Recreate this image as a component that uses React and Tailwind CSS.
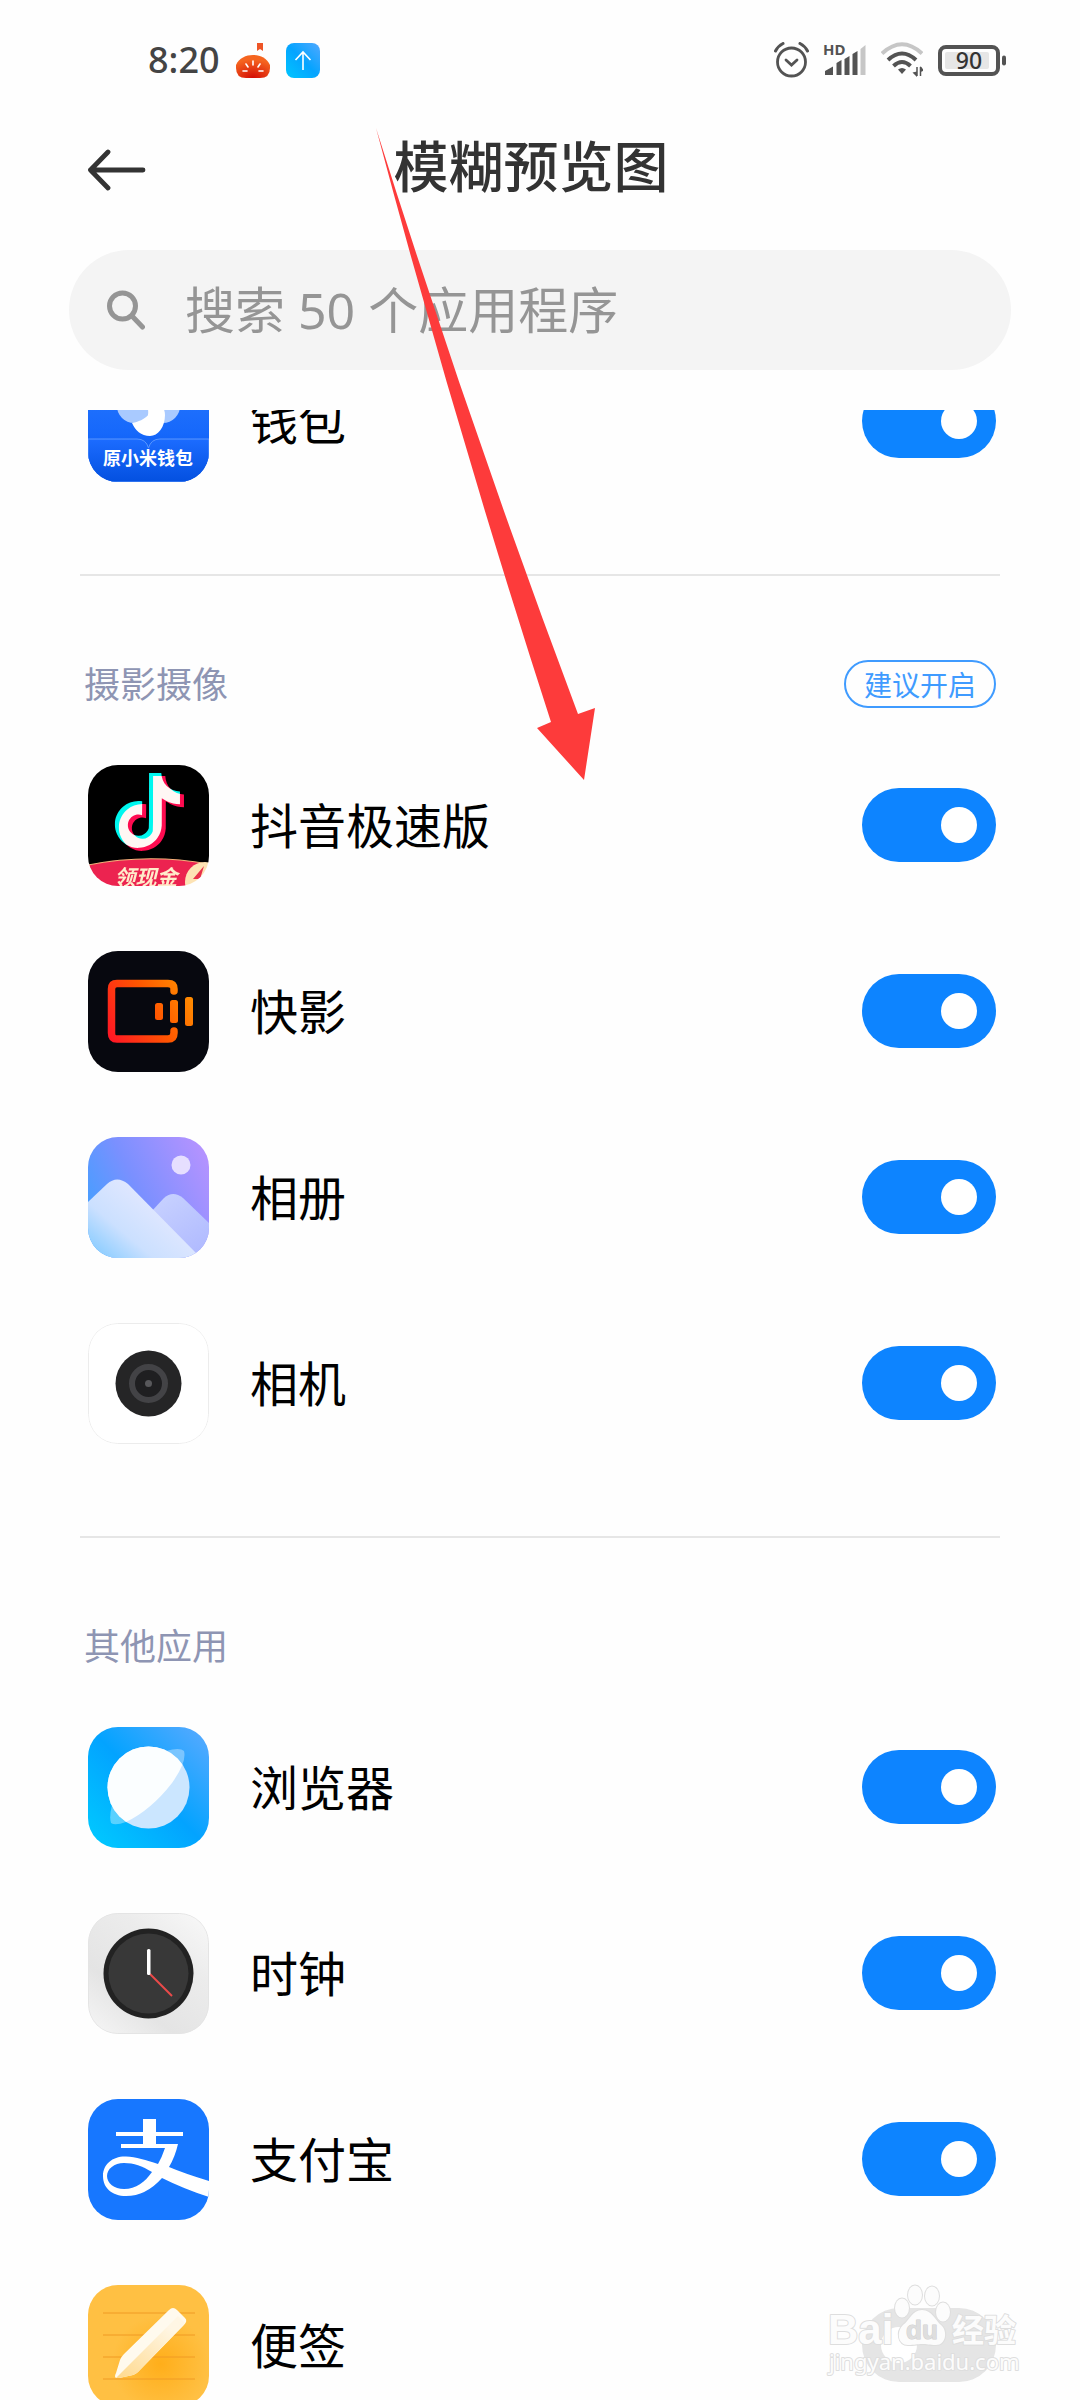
import React, { useState } from 'react';

const WalletIcon = () => (
  <svg viewBox="0 0 121 121" className="size-full">
    <defs>
      <linearGradient id="walletBg" x1="0" y1="0" x2="0" y2="1">
        <stop offset="0" stopColor="#2b7bff" />
        <stop offset="0.6" stopColor="#1668fb" />
        <stop offset="1" stopColor="#0350e0" />
      </linearGradient>
      <linearGradient id="walletFlap" x1="0" y1="0" x2="0" y2="1">
        <stop offset="0" stopColor="#1c6cff" />
        <stop offset="1" stopColor="#0350e0" />
      </linearGradient>
    </defs>
    <rect width="121" height="121" fill="url(#walletBg)" />
    <circle cx="46" cy="45" r="17" fill="#a9caff" />
    <circle cx="75" cy="45" r="17" fill="#a9caff" />
    <path d="M44 62C50 61 57 58 60 54C61 48 58 42 60 40C68 38 77 44 77 54C77 66 70 75 62 75C53 75 47 69 44 62Z" fill="#fff" />
    <path d="M0 78H49Q58 78 60.500 87Q63 78 72 78H121V121H0Z" fill="url(#walletFlap)" stroke="#5a97ff" strokeWidth="1" />
    <text x="60" y="104" textAnchor="middle" fill="#fff" className="font-['Noto_Sans_CJK_SC',sans-serif] text-[18px] font-bold">原小米钱包</text>
  </svg>
);

const notePath =
  'M12.525.02c1.31-.02 2.61-.01 3.91-.02.08 1.53.63 3.09 1.75 4.17 1.12 1.11 2.7 1.62 4.24 1.79v4.03c-1.44-.05-2.89-.35-4.2-.97-.57-.26-1.1-.59-1.62-.93-.01 2.92.01 5.84-.02 8.75-.08 1.4-.54 2.79-1.35 3.94-1.31 1.92-3.58 3.17-5.91 3.21-1.43.08-2.86-.31-4.08-1.03-2.02-1.19-3.44-3.37-3.65-5.71-.02-.5-.03-1-.01-1.49.18-1.9 1.12-3.72 2.58-4.96 1.66-1.44 3.98-2.13 6.15-1.72.02 1.48-.04 2.96-.04 4.44-.99-.32-2.15-.23-3.02.37-.63.41-1.11 1.04-1.36 1.75-.21.51-.15 1.07-.14 1.61.24 1.64 1.82 3.02 3.5 2.87 1.12-.01 2.19-.66 2.77-1.61.19-.33.4-.67.41-1.06.1-1.79.06-3.57.07-5.36.01-4.03-.01-8.05.02-12.07z';

const DouyinIcon = () => (
  <svg viewBox="0 0 121 121" className="size-full isolate">
    <rect width="121" height="121" fill="#000" />
    <path d={notePath} transform="translate(22 8) scale(3.12)" fill="#00f7ef" />
    <path d={notePath} transform="translate(26 11) scale(3.12)" fill="#ff0b50" className="mix-blend-screen" />
    <path d="M0 100Q60 88 121 99V121H0Z" fill="#ec2350" />
    <path d="M0 100Q60 88 121 99" fill="none" stroke="#f3b27a" strokeWidth="1.2" />
    <text x="58" y="120" textAnchor="middle" fill="#ffeccb" className="font-['Noto_Sans_CJK_SC',sans-serif] text-[21px] font-bold italic">领现金</text>
    <circle cx="117" cy="117" r="20" fill="#fde3b4" />
    <path d="M116 101L105 114H111L108 121L119 111H113Z" fill="#e8304a" />
  </svg>
);

const KuaiyingIcon = () => (
  <svg viewBox="0 0 121 121" className="size-full">
    <defs>
      <linearGradient id="kuaiying" gradientUnits="userSpaceOnUse" x1="24" y1="90" x2="104" y2="46">
        <stop offset="0" stopColor="#ff1724" />
        <stop offset="0.55" stopColor="#ff5500" />
        <stop offset="1" stopColor="#ff8c00" />
      </linearGradient>
    </defs>
    <rect width="121" height="121" fill="#07080f" />
    <path d="M86 40V38Q86 32.500 80 32.500H29Q23.500 32.500 23.500 38V82Q23.500 88 29 88H80Q86 88 86 82V80" fill="none" stroke="url(#kuaiying)" strokeWidth="7.500" strokeLinecap="round" />
    <g fill="url(#kuaiying)">
      <rect x="67" y="52" width="8" height="17" rx="2.500" />
      <rect x="82" y="49" width="8" height="23" rx="2.500" />
      <rect x="97" y="46" width="8" height="29" rx="2.500" />
    </g>
  </svg>
);

const GalleryIcon = () => (
  <svg viewBox="0 0 121 121" className="size-full">
    <defs>
      <linearGradient id="sky" x1="0" y1="0.6" x2="1" y2="0.1">
        <stop offset="0" stopColor="#469eff" />
        <stop offset="0.4" stopColor="#7a90ff" />
        <stop offset="1" stopColor="#b893ff" />
      </linearGradient>
      <linearGradient id="hillFront" x1="0" y1="1" x2="0.7" y2="0.4">
        <stop offset="0" stopColor="#7ac8ff" />
        <stop offset="0.5" stopColor="#cbe0ff" />
        <stop offset="1" stopColor="#e0e7ff" />
      </linearGradient>
      <linearGradient id="hillBack" x1="0" y1="0" x2="1" y2="1">
        <stop offset="0.3" stopColor="#c6d0ff" />
        <stop offset="1" stopColor="#adb7ff" />
      </linearGradient>
    </defs>
    <rect width="121" height="121" fill="url(#sky)" />
    <circle cx="93" cy="28" r="9.500" fill="#e6dfff" />
    <path d="M20 121L76 61Q85 53 95 61L121 86V121Z" fill="url(#hillBack)" />
    <path d="M0 65L19 47Q29 38 40 47L108 116V121H0Z" fill="url(#hillFront)" />
  </svg>
);

const CameraIcon = () => (
  <svg viewBox="0 0 121 121" className="size-full">
    <rect width="121" height="121" fill="#fff" />
    <rect x="0.500" y="0.500" width="120" height="120" rx="29" fill="none" stroke="#ececec" />
    <circle cx="60.500" cy="60.500" r="33" fill="#252526" />
    <circle cx="60.500" cy="60.500" r="16.500" fill="#1f1f21" stroke="#434346" strokeWidth="6" />
    <circle cx="60.500" cy="60.500" r="3.500" fill="#58585b" />
  </svg>
);

const BrowserIcon = () => (
  <svg viewBox="0 0 121 121" className="size-full">
    <defs>
      <linearGradient id="browserBg" x1="0" y1="1" x2="1" y2="0">
        <stop offset="0" stopColor="#00ccff" />
        <stop offset="0.5" stopColor="#03a3ff" />
        <stop offset="1" stopColor="#5caaff" />
      </linearGradient>
      <clipPath id="planet">
        <circle cx="60.500" cy="60.500" r="41" />
      </clipPath>
    </defs>
    <rect width="121" height="121" fill="url(#browserBg)" />
    <path d="M78 24Q92 20 96 24Q99 35 84 56Q63 83 38 95Q27 99 23 96Q21 90 24 78Z" fill="#fff" opacity="0.35" />
    <circle cx="60.500" cy="60.500" r="41" fill="#cbe6ff" />
    <path d="M97 24Q98 36 84 56Q63 83 38 95L0 121V0H97Z" fill="#fbfeff" clipPath="url(#planet)" />
  </svg>
);

const ClockIcon = () => (
  <svg viewBox="0 0 121 121" className="size-full">
    <defs>
      <linearGradient id="clockBg" x1="0.1" y1="1" x2="0.9" y2="0">
        <stop offset="0" stopColor="#f4f4f4" />
        <stop offset="0.3" stopColor="#e4e4e4" />
        <stop offset="0.7" stopColor="#ececec" />
        <stop offset="1" stopColor="#f7f7f7" />
      </linearGradient>
    </defs>
    <rect width="121" height="121" fill="url(#clockBg)" />
    <rect x="0.500" y="0.500" width="120" height="120" rx="29" fill="none" stroke="#e4e4e4" />
    <circle cx="60.500" cy="60.500" r="45" fill="#222" />
    <circle cx="60.500" cy="60.500" r="40" fill="#383838" />
    <path d="M62 61L84 83" stroke="#ea4a4a" strokeWidth="2" />
    <rect x="59" y="36" width="3.500" height="26" rx="1.500" fill="#fff" />
  </svg>
);

const AlipayIcon = () => (
  <svg viewBox="0 0 121 121" className="size-full">
    <rect width="121" height="121" fill="#1777ff" />
    <g fill="#fff">
      <path d="M55 20H68V33H95V37H68V45H90Q87 58 81 68Q95 74 121 82V98Q96 90 74 79Q58 97 38 97C24 97 15 89 15 77C15 65 25 57 38 57.500C48 58 58 61 70 65Q74 58 77 49H33V45H55V37H28V33H55Z" />
    </g>
    <path d="M64 73C54 67 46 64 36 64C26 64 19 70 19 77C19 84 26 90 36 90C48 90 57 83 64 73Z" fill="#1777ff" />
  </svg>
);

const NotesIcon = () => (
  <svg viewBox="0 0 121 121" className="size-full">
    <defs>
      <radialGradient id="notesBg" cx="0.6" cy="0.65" r="0.4">
        <stop offset="0" stopColor="#ffae1a" />
        <stop offset="1" stopColor="#ffc043" />
      </radialGradient>
      <linearGradient id="pencil" x1="0" y1="1" x2="1" y2="0">
        <stop offset="0" stopColor="#ffd98c" />
        <stop offset="0.8" stopColor="#fff6e4" />
      </linearGradient>
    </defs>
    <rect width="121" height="121" fill="url(#notesBg)" />
    <path d="M15 28H107M15 50H107M15 72H107M15 94H107" stroke="#f09a25" strokeWidth="1" />
    <path d="M28 93Q26 92 28 88L32 75Q33 72 36 69L81 25Q85 21 89 25L97 33Q100 36 96 40L50 87Q48 89 45 90L31 93Z" fill="#fffaee" />
    <path d="M28 93L90 31L97 38L50 87Q48 89 45 90L31 93Z" fill="url(#pencil)" />
  </svg>
);

const SearchIcon = () => (
  <svg viewBox="0 0 38 40" className="h-10 w-[38px] shrink-0" fill="none" stroke="#959595" strokeWidth="5">
    <circle cx="15.500" cy="16" r="13" />
    <path d="M25 26L35.500 37" strokeLinecap="round" />
  </svg>
);

const TomatoIcon = () => (
  <svg viewBox="0 0 34 35" className="h-[35px] w-[34px]">
    <defs>
      <radialGradient id="tomato" cx="0.5" cy="1" r="0.8">
        <stop offset="0" stopColor="#d30c05" />
        <stop offset="1" stopColor="#f5641f" />
      </radialGradient>
    </defs>
    <path d="M21 0H27V8L24 6L21 8Z" fill="#ee5526" />
    <path d="M0 22C3 15 10 12 17 12S31 15 34 22V25Q34 35 24 35H10Q0 35 0 25Z" fill="url(#tomato)" />
    <path d="M17 18V22M10 21L12 24M24 21L22 24M7 28H11M27 28H23" stroke="#fff" strokeWidth="1.600" strokeLinecap="round" />
  </svg>
);

const UploadIcon = () => (
  <svg viewBox="0 0 34 35" className="h-[35px] w-[34px]">
    <defs>
      <linearGradient id="uploadBg" x1="0" y1="1" x2="1" y2="0">
        <stop offset="0" stopColor="#00c6ff" />
        <stop offset="0.5" stopColor="#05a4ff" />
        <stop offset="1" stopColor="#52a8ff" />
      </linearGradient>
    </defs>
    <rect width="34" height="35" rx="8" fill="url(#uploadBg)" />
    <path d="M17 27V9M9.500 17L17 9L24.500 17" fill="none" stroke="#fff" strokeWidth="1.600" />
  </svg>
);

const AlarmIcon = () => (
  <svg viewBox="0 0 35 36" className="h-9 w-[35px]" fill="none" stroke="#535353" strokeLinecap="round">
    <circle cx="17.500" cy="20" r="14" strokeWidth="2.800" />
    <path d="M12 18L17.500 23L23 18" strokeWidth="2.800" />
    <path d="M1.500 9Q4 4 9 1.500M33.500 9Q31 4 26 1.500" strokeWidth="3" />
  </svg>
);

const SignalIcon = () => (
  <svg viewBox="0 0 42 34" className="h-[34px] w-[42px] overflow-visible" fill="#535353">
    <text x="-1" y="12" className="font-['Noto_Sans',sans-serif] text-[15px] font-bold">HD</text>
    <path d="M1 32V28L9 23.500V32ZM12.500 32V20L17.500 17V32ZM20.500 32V16L25.500 13V32ZM28.500 32V11L33.500 8V32Z" />
    <path d="M36.500 32V6L41.500 2V32Z" fill="#c6c6c6" />
  </svg>
);

const WifiIcon = () => (
  <svg viewBox="0 0 42 36" className="h-9 w-[42px]" fill="none" stroke="#535353" strokeWidth="4">
    <path d="M1 11.500Q21 -7 41 11.500" stroke="#c6c6c6" />
    <path d="M7 18Q21 5 35 18" />
    <path d="M12.500 24Q21 16 29.500 24" />
    <path d="M17 27.500Q21 24.500 25 27.500L21 32Z" fill="#535353" stroke="none" />
    <path d="M36 25V34M39.500 25V34" strokeWidth="1.500" />
    <path d="M36 35V29.500L31.500 30.500ZM39.500 24V30L43 28.500Z" fill="#535353" stroke="none" />
  </svg>
);

const BatteryIcon = () => (
  <svg viewBox="0 0 68 31" className="h-[31px] w-[68px]">
    <rect x="2" y="2" width="58" height="27" rx="6" fill="none" stroke="#535353" strokeWidth="4" />
    <rect x="7" y="7" width="44" height="17" rx="2" fill="#e6e6e6" />
    <rect x="64" y="10.500" width="4" height="10" rx="2" fill="#535353" />
    <text x="31" y="24" textAnchor="middle" fill="#333" className="font-['Noto_Sans',sans-serif] text-[23px] font-medium">90</text>
  </svg>
);

const sections = [
  {
    apps: [{ id: 'wallet', name: '钱包', icon: WalletIcon, on: true }],
  },
  {
    title: '摄影摄像',
    badge: '建议开启',
    apps: [
      { id: 'douyin', name: '抖音极速版', icon: DouyinIcon, on: true },
      { id: 'kuaiying', name: '快影', icon: KuaiyingIcon, on: true },
      { id: 'gallery', name: '相册', icon: GalleryIcon, on: true },
      { id: 'camera', name: '相机', icon: CameraIcon, on: true },
    ],
  },
  {
    title: '其他应用',
    apps: [
      { id: 'browser', name: '浏览器', icon: BrowserIcon, on: true },
      { id: 'clock', name: '时钟', icon: ClockIcon, on: true },
      { id: 'alipay', name: '支付宝', icon: AlipayIcon, on: true },
      { id: 'notes', name: '便签', icon: NotesIcon, on: false },
    ],
  },
];

const AppRow = ({ app }) => {
  const [checked, setChecked] = useState(app.on);
  const Icon = app.icon;

  return (
    <li className="flex h-[186px] items-center gap-[41px] pr-[84px] pl-[88px]">
      <div className="size-[121px] shrink-0 overflow-hidden rounded-[30px]">
        <Icon />
      </div>
      <label htmlFor={app.id} className="flex-1 pb-1 text-[48px] leading-[60px] text-black">{app.name}</label>
      <input
        id={app.id}
        type="checkbox"
        checked={checked}
        onChange={(e) => setChecked(e.target.checked)}
        className="flex h-[74px] w-[134px] shrink-0 appearance-none items-center rounded-full bg-[#e5e5e5] px-[19px] before:size-9 before:rounded-full before:bg-white checked:justify-end checked:bg-[#0d84ff]"
      />
    </li>
  );
};

const Section = ({ section }) => (
  <section className="pb-[60px]">
    {section.title && (
      <>
        <hr className="mx-20 border-t-2 border-[#e6e6e6]" />
        <div className="mt-[60px] flex h-24 items-center justify-between pr-[84px] pl-[84px]">
          <h2 className="pb-1 text-[36px] leading-[48px] text-[#8e95b3]">{section.title}</h2>
          {section.badge && (
            <span className="flex h-12 items-center rounded-full border-2 border-[#3f9bff] px-[18px] text-[28px] leading-[40px] text-[#3f9bff]">
              {section.badge}
            </span>
          )}
        </div>
      </>
    )}
    <ul>
      {section.apps.map((app) => (
        <AppRow key={app.id} app={app} />
      ))}
    </ul>
  </section>
);

const Watermark = () => (
  <svg viewBox="0 0 200 104" className="pointer-events-none absolute right-[56px] bottom-[14px] h-[104px] w-[200px]">
    <g fill="#fcfcfc" stroke="#dedede" strokeWidth="2" paintOrder="stroke" strokeLinejoin="round">
      <ellipse cx="78" cy="26" rx="7" ry="9.500" />
      <ellipse cx="91" cy="13" rx="7" ry="9.500" />
      <ellipse cx="108" cy="14" rx="7" ry="9.500" />
      <ellipse cx="119" cy="30" rx="7" ry="9.500" />
      <path d="M98 28C108 28 111 38 117 43C124 49 122 63 112 63C105 63 103 62 98 62S91 63 84 63C74 63 72 50 79 43C86 38 88 28 98 28Z" />
      <text x="4" y="62" className="font-['Liberation_Sans',sans-serif] text-[42px] font-bold">Bai</text>
      <text x="128" y="60" className="font-['Noto_Sans_CJK_SC',sans-serif] text-[32px] font-bold">经验</text>
      <text x="5" y="88" className="font-['Noto_Sans',sans-serif] text-[22px]">jingyan.baidu.com</text>
      <text x="82" y="57" fill="#dedede" stroke="#cfcfcf" strokeWidth="1" className="font-['Liberation_Sans',sans-serif] text-[26px] font-bold">du</text>
    </g>
  </svg>
);

export default function App() {
  return (
    <div className="relative flex h-screen flex-col overflow-hidden bg-[#fefefe] font-['Noto_Sans_CJK_SC',sans-serif]">
      <div className="flex h-[120px] shrink-0 items-center justify-between pr-[74px] pl-[148px]">
        <div className="flex items-center gap-4">
          <span className="font-['Noto_Sans',sans-serif] text-[36px] leading-[48px] font-medium text-[#444]">8:20</span>
          <TomatoIcon />
          <UploadIcon />
        </div>
        <div className="flex items-center gap-[15px]">
          <AlarmIcon />
          <SignalIcon />
          <WifiIcon />
          <BatteryIcon />
        </div>
      </div>

      <header className="flex h-[130px] shrink-0 items-start pr-[164px] pl-[86px]">
        <button type="button" aria-label="返回" className="flex h-[100px] w-[60px] items-center">
          <svg viewBox="0 0 60 42" className="h-[42px] w-[60px]" fill="none" stroke="#333" strokeWidth="4.800" strokeLinecap="round" strokeLinejoin="round">
            <path d="M57 21H4.500M22 3L4.500 21L22 39" />
          </svg>
        </button>
        <h1 className="flex-1 text-center text-[55px] leading-[86px] font-medium text-[#333]">模糊预览图</h1>
      </header>

      <div className="mx-[69px] flex h-[120px] shrink-0 items-center gap-10 rounded-full bg-[#f4f4f4] px-[38px]">
        <SearchIcon />
        <input
          type="search"
          aria-label="搜索应用程序"
          placeholder="搜索 50 个应用程序"
          className="h-20 min-w-0 flex-1 bg-transparent font-['Noto_Sans','Noto_Sans_CJK_SC',sans-serif] text-[50px] leading-[80px] outline-none placeholder:text-[#959595]"
        />
      </div>

      {/* list is scrolled so the first row is cut off by the top edge */}
      <main className="mt-10 min-h-0 flex-1 overflow-hidden">
        <div className="-mt-[82px]">
          {sections.map((section, i) => (
            <Section key={i} section={section} />
          ))}
        </div>
      </main>

      <svg viewBox="0 0 220 654" className="pointer-events-none absolute top-32 left-[376px] h-[654px] w-[220px]">
        <path d="M0 0Q92 293 202 586L219 580L208 652L161 600L175 594Q79 297 0 0Z" fill="#fd3b3b" />
      </svg>
      <Watermark />
    </div>
  );
}
